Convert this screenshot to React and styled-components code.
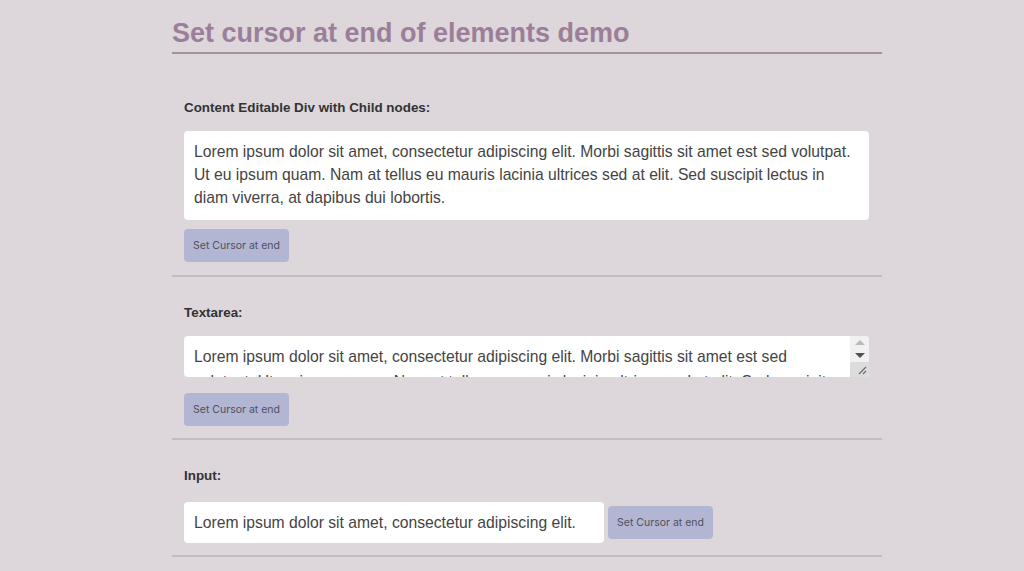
import React, { useRef } from 'react';
import styled, { createGlobalStyle } from 'styled-components';

const GlobalStyle = createGlobalStyle`
  html, body {
    margin: 0;
    padding: 0;
    background: #ddd6db;
  }
  body {
    font-family: "Liberation Sans", Arial, sans-serif;
    color: #333;
  }
`;

const Page = styled.div`
  box-sizing: border-box;
  width: 740px;
  margin: 0 auto;
  padding: 16px 0 0 30px;
`;

const Title = styled.h1`
  margin: 0 0 18px;
  padding-bottom: 2px;
  font-size: 27px;
  font-weight: 700;
  color: #9b7f98;
  border-bottom: 2px solid #a58fa2;
  line-height: 34px;
`;

const Section = styled.section`
  padding: 28px 13px ${p => p.$pb || 12}px 12px;
  border-bottom: 2px solid #c4bcc3;
`;

const Label = styled.div`
  font-size: 13.4px;
  font-weight: 700;
  color: #333;
  line-height: 15px;
  margin-bottom: ${p => p.$mb || 16}px;
`;

const EditableBox = styled.div`
  background: #fff;
  border-radius: 4px;
  padding: 9px 10px 11px;
  font-size: 15.7px;
  line-height: 23px;
  color: #444;
  outline: none;
`;

const AreaWrap = styled.div`
  position: relative;
  height: 41px;
`;

const TextArea = styled.textarea`
  display: block;
  box-sizing: border-box;
  width: 100%;
  height: 41px;
  margin: 0;
  background: #fff;
  border: none;
  border-radius: 4px;
  padding: 8px 27px 8px 10px;
  overflow: hidden;
  resize: none;
  font-family: "Liberation Sans", Arial, sans-serif;
  font-size: 15.7px;
  line-height: 25px;
  color: #444;
  outline: none;
`;

const ScrollBar = styled.div`
  position: absolute;
  top: 0;
  right: 0;
  bottom: 0;
  width: 19px;
  display: flex;
  flex-direction: column;
  background: #f1f1f1;
  border-radius: 0 4px 4px 0;
  overflow: hidden;
`;

const Arrow = styled.div`
  height: 13px;
  display: flex;
  align-items: center;
  justify-content: center;
  &::after {
    content: '';
    width: 0;
    height: 0;
    border-left: 5px solid transparent;
    border-right: 5px solid transparent;
    ${p => (p.$up
      ? 'border-bottom: 5px solid #b9b9b9;'
      : 'border-top: 5px solid #505050;')}
  }
`;

const Grip = styled.div`
  flex: 1;
  background: #dcdcdc;
  display: flex;
  align-items: flex-end;
  justify-content: flex-end;
  padding: 0 2px 2px 0;
`;

const Row = styled.div`
  display: flex;
  align-items: center;
  gap: 4px;
`;

const TextInput = styled.input`
  box-sizing: border-box;
  width: 420px;
  height: 41px;
  margin: 0;
  background: #fff;
  border: none;
  border-radius: 4px;
  padding: 0 10px;
  font-family: "Liberation Sans", Arial, sans-serif;
  font-size: 15.7px;
  color: #444;
  outline: none;
`;

const Button = styled.button`
  display: block;
  height: 33px;
  width: 105px;
  margin-top: ${p => p.$mt || 0}px;
  padding: 0;
  background: #b3b6d3;
  border: none;
  border-radius: 4px;
  font-family: Inter, "Noto Sans", sans-serif;
  font-size: 10.5px;
  color: #50505e;
  cursor: pointer;
`;

const LOREM =
  'Lorem ipsum dolor sit amet, consectetur adipiscing elit. Morbi sagittis sit amet est sed volutpat. Ut eu ipsum quam. Nam at tellus eu mauris lacinia ultrices sed at elit. Sed suscipit lectus in diam viverra, at dapibus dui lobortis.';

const moveToEnd = el => {
  if (!el) return;
  el.focus();
  if (typeof el.setSelectionRange === 'function') {
    const len = el.value.length;
    el.setSelectionRange(len, len);
    return;
  }
  const range = document.createRange();
  range.selectNodeContents(el);
  range.collapse(false);
  const sel = window.getSelection();
  sel.removeAllRanges();
  sel.addRange(range);
};

export default function App() {
  const divRef = useRef(null);
  const areaRef = useRef(null);
  const inputRef = useRef(null);

  return (
    <>
      <GlobalStyle />
      <Page>
        <Title>Set cursor at end of elements demo</Title>

        <Section $pb={13}>
          <Label>Content Editable Div with Child nodes:</Label>
          <EditableBox ref={divRef} contentEditable suppressContentEditableWarning>
            <span>Lorem ipsum dolor sit amet, consectetur adipiscing elit. Morbi sagittis sit amet est sed volutpat. </span>
            <span>Ut eu ipsum quam. Nam at tellus eu mauris lacinia ultrices sed at elit. </span>
            <span>Sed suscipit lectus in diam viverra, at dapibus dui lobortis.</span>
          </EditableBox>
          <Button $mt={9} onClick={() => moveToEnd(divRef.current)}>Set Cursor at end</Button>
        </Section>

        <Section>
          <Label>Textarea:</Label>
          <AreaWrap>
            <TextArea ref={areaRef} defaultValue={LOREM} />
            <ScrollBar>
              <Arrow $up />
              <Arrow />
              <Grip>
                <svg width="10" height="10" viewBox="0 0 10 10">
                  <path d="M9 2 L2 9 M9 6 L6 9" stroke="#6a6a6a" strokeWidth="1.1" fill="none" />
                </svg>
              </Grip>
            </ScrollBar>
          </AreaWrap>
          <Button $mt={16} onClick={() => moveToEnd(areaRef.current)}>Set Cursor at end</Button>
        </Section>

        <Section>
          <Label $mb={19}>Input:</Label>
          <Row>
            <TextInput ref={inputRef} defaultValue="Lorem ipsum dolor sit amet, consectetur adipiscing elit." />
            <Button onClick={() => moveToEnd(inputRef.current)}>Set Cursor at end</Button>
          </Row>
        </Section>
      </Page>
    </>
  );
}
